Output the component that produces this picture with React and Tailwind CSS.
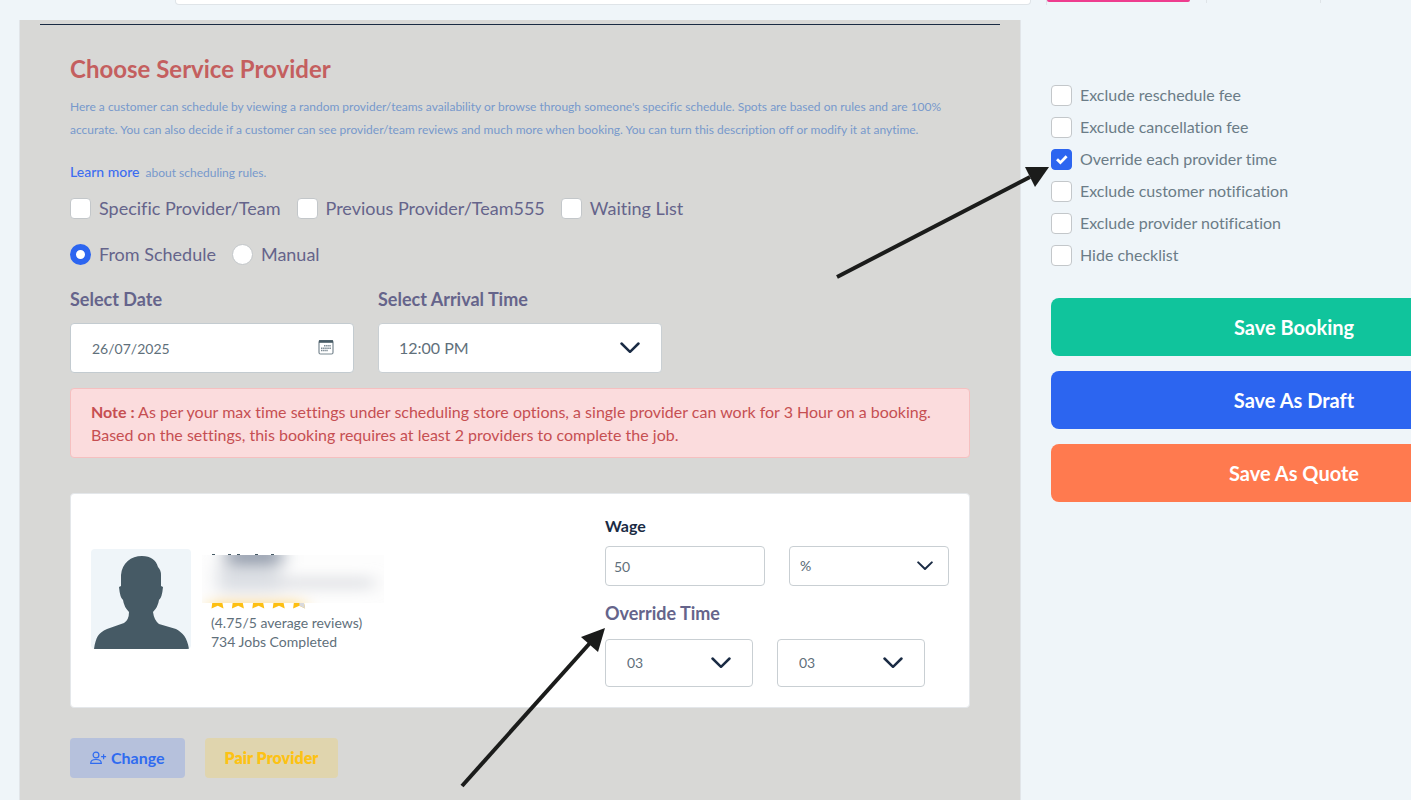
import React, { useState } from 'react';

const bookingOptions = [
  { id: 'reschedule', label: 'Exclude reschedule fee' },
  { id: 'cancellation', label: 'Exclude cancellation fee' },
  { id: 'override', label: 'Override each provider time' },
  { id: 'customer', label: 'Exclude customer notification' },
  { id: 'provider', label: 'Exclude provider notification' },
  { id: 'checklist', label: 'Hide checklist' },
];

const providerFilters = ['Specific Provider/Team', 'Previous Provider/Team555', 'Waiting List'];

const Checkbox = ({ id, label, checked, onChange, labelClass }) => (
  <label htmlFor={id} className="flex items-center gap-2">
    <span className="relative flex size-[21px]">
      <input
        id={id}
        type="checkbox"
        checked={checked}
        onChange={onChange}
        className="size-[21px] appearance-none rounded border border-[#c3c7ca] bg-white checked:border-[#2c65f0] checked:bg-[#2c65f0]"
      />
      {checked && (
        <svg viewBox="0 0 21 21" className="pointer-events-none absolute inset-0" aria-hidden="true">
          <path d="M6 10.2l3.400 3.400 6.200-6.400" fill="none" stroke="#fff" strokeWidth="2.800" />
        </svg>
      )}
    </span>
    <span className={labelClass}>{label}</span>
  </label>
);

const Radio = ({ label, checked, onChange }) => (
  <label className="flex items-center gap-2 text-lg leading-6 text-[#65648b]">
    <input
      type="radio"
      name="schedule-mode"
      checked={checked}
      onChange={onChange}
      className="size-[21px] appearance-none rounded-full border border-[#c3c7ca] bg-white checked:border-[6px] checked:border-[#2c65f0]"
    />
    {label}
  </label>
);

const Select = ({ id, label, options, className, iconClass }) => (
  <div className="relative">
    <select
      id={id}
      aria-label={label}
      className={`w-full appearance-none rounded border border-[#c9cfd3] bg-white text-[#5f707b] ${className}`}
    >
      {options.map((option) => (
        <option key={option}>{option}</option>
      ))}
    </select>
    <svg viewBox="0 0 20 12" className={`pointer-events-none absolute ${iconClass}`} aria-hidden="true">
      <path d="M1.5 1.5L10 9.8l8.500-8.300" fill="none" stroke="#1a2b44" strokeWidth="2.500" strokeLinecap="round" strokeLinejoin="round" />
    </svg>
  </div>
);

const CalendarIcon = () => (
  <svg viewBox="0 0 16 16" className="pointer-events-none absolute top-4 right-5 size-4" aria-hidden="true">
    <rect x="1" y="1.500" width="14" height="13.500" rx="1.500" fill="none" stroke="#7b8992" strokeWidth="1.200" />
    <path d="M1 2.500h14" stroke="#465a65" strokeWidth="2.600" />
    <path d="M6 6.800h7M3 9.200h10M3 11.600h7" stroke="#7b8992" strokeWidth="1.500" strokeDasharray="1.500 0.600" />
  </svg>
);

const PersonPlusIcon = () => (
  <svg viewBox="0 0 17 14" className="h-[14px] w-[17px]" fill="none" stroke="currentColor" strokeWidth="1.200" aria-hidden="true">
    <circle cx="6" cy="4" r="2.900" />
    <path d="M.7 12.300c0-2.300 2.200-3.800 5.300-3.800s5.300 1.500 5.300 3.800zM13.600 3.200v5M11.100 5.700h5" />
  </svg>
);

const Avatar = () => (
  <svg viewBox="0 0 100 100" className="size-[100px] rounded bg-[#eff5f9]" role="img" aria-label="Provider">
    <path
      fill="#465a65"
      d="M3 100C5 88 7 84 16 80L33 74Q38 71 38 63Q33 58 32 51Q29 49 28 38L30 37V26C31 14 40 7 51 7C60 7 65 11 67 18Q70 21 70 26V37L72 38Q71 49 68 51Q67 58 62 63Q63 71 68 75L85 80C92 84 96 88 98 100Z"
    />
  </svg>
);

// Provider name and email are hidden, only the edges of name and stars show
const HiddenDetails = () => (
  <svg viewBox="0 0 182 64" className="h-16 w-[182px]" aria-hidden="true">
    <defs>
      <filter id="soft" x="-40%" y="-150%" width="180%" height="400%">
        <feGaussianBlur stdDeviation="9 7" />
      </filter>
      <clipPath id="mask-area">
        <rect y="6" width="182" height="48" />
      </clipPath>
    </defs>
    <path d="M10 5h3v2h-3zM26 5h3v2h-3zM35 5h3v2h-3zM53 5h3v2h-3zM69 5h3v2h-3z" fill="#465a65" />
    {[0, 1, 2, 3, 4].map((i) => (
      <g key={i} transform={`translate(${i * 20.4} 0)`}>
        <path d="M10.500 52h9.500l1.500 7.500-5.700-2.800-6.300 2.800z" fill="#fdbf12" />
        {i === 4 && <path d="M15.800 52H20l1.500 7.500-5.700-2.800z" fill="#d9d9dc" />}
      </g>
    ))}
    <rect y="6" width="182" height="48" fill="#fdfdfd" />
    <g clipPath="url(#mask-area)">
      <g filter="url(#soft)">
        <rect x="24" y="-2" width="56" height="19" fill="#929bab" />
        <rect x="16" y="16" width="62" height="27" fill="#dcdfe4" />
        <rect x="70" y="29" width="102" height="10" fill="#dbdde1" />
        <rect x="8" y="54" width="94" height="9" fill="#fdd060" />
      </g>
    </g>
  </svg>
);

const BookingPage = () => {
  const [options, setOptions] = useState({ override: true });
  const [filters, setFilters] = useState({});
  const [mode, setMode] = useState('From Schedule');
  const [date, setDate] = useState('26/07/2025');
  const [wage, setWage] = useState('50');

  return (
    <div className="min-h-screen overflow-hidden bg-[#eff5f9] font-['Lato',sans-serif] [font-variant-ligatures:none]">
      <header className="flex h-5 items-start gap-[15px] pl-[175px]">
        <div className="h-[5px] flex-1 rounded-b border border-t-0 border-[#dfe4e8] bg-white" />
        <div className="flex w-[365px]">
          <div className="w-40 pr-4">
            <div className="h-[5px] border-l border-[#dfe4e8]">
              <div className="h-[2px] rounded-b bg-[#ee3d8f]" />
            </div>
          </div>
          <div className="h-[3px] w-[115px] border-x border-[#dfe4e8]" />
        </div>
      </header>

      <div className="flex gap-[30px] pl-[19px]">
        <main className="min-w-0 flex-1 border-x border-[#e1e5e9] bg-[#d8d8d6] px-5 pt-1 pb-6">
          <hr className="border-[#1a2b44]" />
          <div className="px-[30px] pt-7">
            <h1 className="text-2xl leading-8 font-bold text-[#c45f5f]">Choose Service Provider</h1>
            <p className="mt-[10px] text-xs leading-[23px] text-[#7799cc]">
              Here a customer can schedule by viewing a random provider/teams availability or browse through
              someone's specific schedule. Spots are based on rules and are 100% accurate. You can also decide if a
              customer can see provider/team reviews and much more when booking. You can turn this description off or
              modify it at anytime.
            </p>
            <p className="mt-[19px] text-xs leading-6 text-[#7799cc]">
              <a href="#rules" className="mr-[6px] text-sm leading-6 font-medium text-[#3c6df0]">Learn more</a>
              about scheduling rules.
            </p>

            <div className="mt-[11px] flex flex-wrap gap-4">
              {providerFilters.map((name) => (
                <Checkbox
                  key={name}
                  id={name}
                  label={name}
                  checked={!!filters[name]}
                  onChange={(e) => setFilters({ ...filters, [name]: e.target.checked })}
                  labelClass="text-lg leading-6 text-[#65648b]"
                />
              ))}
            </div>

            <div className="mt-[22px] flex gap-4">
              {['From Schedule', 'Manual'].map((name) => (
                <Radio key={name} label={name} checked={mode === name} onChange={() => setMode(name)} />
              ))}
            </div>

            <div className="mt-[21px] grid w-[592px] grid-cols-2 gap-6">
              <div>
                <label htmlFor="date" className="block text-lg leading-6 font-bold text-[#65648b]">Select Date</label>
                <div className="relative mt-3">
                  <input
                    id="date"
                    type="text"
                    value={date}
                    onChange={(e) => setDate(e.target.value)}
                    className="h-[50px] w-full rounded border border-[#c3cbd0] bg-white px-[21px] text-sm text-[#5f707b]"
                  />
                  <CalendarIcon />
                </div>
              </div>
              <div>
                <label htmlFor="arrival" className="block text-lg leading-6 font-bold text-[#65648b]">Select Arrival Time</label>
                <div className="mt-3">
                  <Select
                    id="arrival"
                    options={['12:00 PM', '1:00 PM', '2:00 PM']}
                    className="h-[50px] px-5 text-base"
                    iconClass="top-[19px] right-[22px] h-3 w-5"
                  />
                </div>
              </div>
            </div>

            <div className="mt-[15px] rounded border border-[#f5c0c0] bg-[#fbdcdd] px-5 py-[11px] text-base leading-[23px] text-[#c64f52]">
              <strong>Note :</strong> As per your max time settings under scheduling store options, a single provider
              can work for 3 Hour on a booking. Based on the settings, this booking requires at least 2 providers to
              complete the job.
            </div>

            <section className="mt-[35px] flex items-center justify-between rounded border border-[#e4e7ea] bg-white px-5 py-5">
              <div className="flex items-start gap-[11px] pb-[2px]">
                <Avatar />
                <div>
                  <HiddenDetails />
                  <div className="pl-[9px] text-sm leading-[19px] text-[#5f707b]">
                    <p>(4.75/5 average reviews)</p>
                    <p>734 Jobs Completed</p>
                  </div>
                </div>
              </div>

              <div className="relative w-[344px]">
                <label htmlFor="wage" className="block text-base leading-6 font-bold text-[#1a2b44]">Wage</label>
                <div className="mt-2 grid grid-cols-2 gap-6">
                  <input
                    id="wage"
                    type="text"
                    value={wage}
                    onChange={(e) => setWage(e.target.value)}
                    className="h-10 w-full rounded border border-[#c9cfd3] bg-white px-2 text-sm text-[#5f707b]"
                  />
                  <Select
                    id="wage-unit"
                    label="Wage unit"
                    options={['%', '$']}
                    className="h-10 px-[10px] text-sm font-medium"
                    iconClass="top-[15px] right-4 h-[10px] w-4"
                  />
                </div>
                <h2 className="mt-[15px] text-lg leading-6 font-bold text-[#65648b]">Override Time</h2>
                <div className="mt-[14px] grid w-[320px] grid-cols-2 gap-6">
                  <Select id="hours" label="Hours" options={['03', '04']} className="h-12 px-[21px] text-sm" iconClass="top-[18px] right-[22px] h-3 w-5" />
                  <Select id="minutes" label="Minutes" options={['03', '04']} className="h-12 px-[21px] text-sm" iconClass="top-[18px] right-[22px] h-3 w-5" />
                </div>
                {/* pointer to the override time fields */}
                <svg viewBox="0 0 146 162" className="pointer-events-none absolute top-[113px] -left-[145px] h-[162px] w-[146px]" aria-hidden="true">
                  <path d="M2 159L130 16" stroke="#1b1c1b" strokeWidth="4" />
                  <path d="M145 1L121 10l17 15z" fill="#1b1c1b" />
                </svg>
              </div>
            </section>

            <div className="mt-[30px] flex gap-5">
              <button type="button" className="flex h-10 items-center gap-1 rounded bg-[#b6c1dc] px-5 text-base font-bold text-[#2f6bf0]">
                <PersonPlusIcon />
                Change
              </button>
              <button type="button" className="h-10 rounded bg-[#e0d5ae] px-5 text-base font-extrabold text-[#fdc214]">
                Pair Provider
              </button>
            </div>
          </div>
        </main>

        <aside className="relative -mr-[126px] w-[486px] shrink-0 pt-[59px]">
          {bookingOptions.map(({ id, label }) => (
            <div key={id} className="flex h-8 items-center">
              <Checkbox
                id={id}
                label={label}
                checked={!!options[id]}
                onChange={(e) => setOptions({ ...options, [id]: e.target.checked })}
                labelClass="text-base text-[#6b7c87]"
              />
            </div>
          ))}
          <div className="mt-[27px] flex flex-col gap-[15px] text-xl font-bold text-white">
            <button type="button" className="h-[58px] rounded-lg bg-[#10c49c]">Save Booking</button>
            <button type="button" className="h-[58px] rounded-lg bg-[#2c65f0]">Save As Draft</button>
            <button type="button" className="h-[58px] rounded-lg bg-[#ff7a4f]">Save As Quote</button>
          </div>
          {/* pointer to the override option */}
          <svg viewBox="0 0 216 114" className="pointer-events-none absolute top-[146px] -left-[216px] h-[114px] w-[216px]" aria-hidden="true">
            <path d="M2 111L195 11" stroke="#1b1c1b" strokeWidth="4" />
            <path d="M214 1L190 1l10 20z" fill="#1b1c1b" />
          </svg>
        </aside>
      </div>
    </div>
  );
};

export default BookingPage;
